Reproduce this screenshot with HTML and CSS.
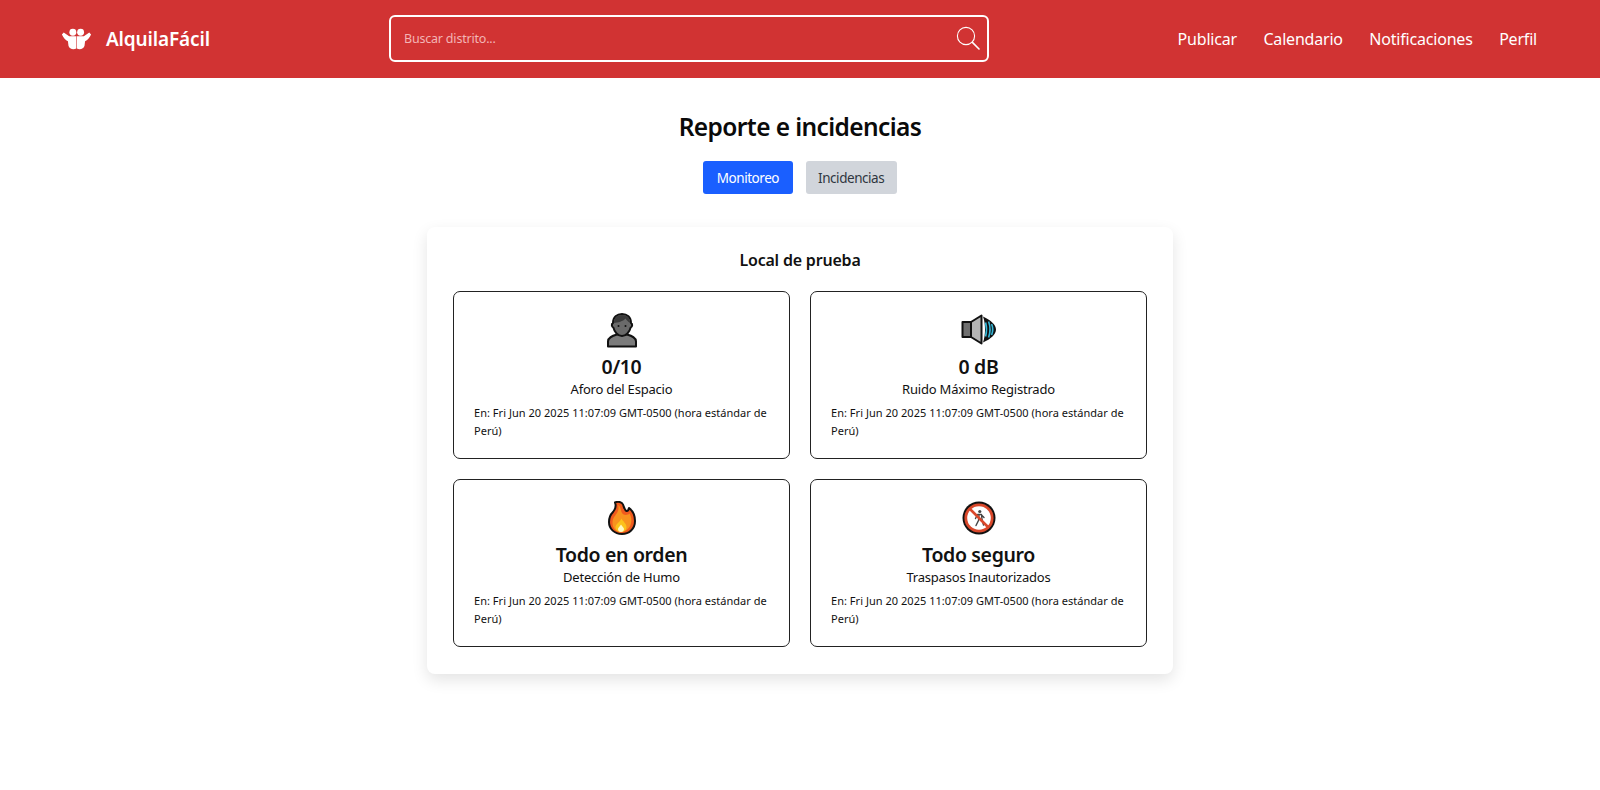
FILE: index.html
```html
<!DOCTYPE html>
<html lang="es">
<head>
<meta charset="utf-8">
<title>AlquilaFácil</title>
<link rel="stylesheet" href="styles.css">
</head>
<body>
<header class="topbar">
  <a class="brand" href="#">
    <svg class="brand-icon" viewBox="0 0 34 24" width="31" height="22" aria-hidden="true">
      <circle cx="13" cy="4.5" r="3.8" fill="#fff"/>
      <circle cx="21.5" cy="4.5" r="3.8" fill="#fff"/>
      <path fill="#fff" d="M1 7 L3 4.8 L9 9 H16.8 V22.5 C13.5 24 9 23 8.2 19.5 L7.6 14.5 C5 13.5 2.6 10.5 1 7Z"/>
      <path fill="#fff" d="M33 7 L31 4.8 L25 9 H17.4 V22.5 C20.5 24 25 23 25.8 19.5 L26.4 14.5 C29 13.5 31.4 10.5 33 7Z"/>
    </svg>
    <span class="brand-name">AlquilaFácil</span>
  </a>
  <form class="search">
    <input class="search-input" type="text" placeholder="Buscar distrito...">
    <svg class="search-icon" viewBox="0 0 24 24" width="24" height="24" aria-hidden="true">
      <circle cx="10" cy="10" r="8.6" fill="none" stroke="#fff" stroke-width="1.1"/>
      <path d="M16.4 16.4 L23 23" stroke="#fff" stroke-width="1.6" stroke-linecap="round"/>
    </svg>
  </form>
  <nav class="menu">
    <a href="#">Publicar</a>
    <a href="#">Calendario</a>
    <a href="#">Notificaciones</a>
    <a href="#">Perfil</a>
  </nav>
</header>

<main class="content">
  <h1 class="title">Reporte e incidencias</h1>
  <div class="tabs">
    <button class="tab tab-active" type="button">Monitoreo</button>
    <button class="tab" type="button">Incidencias</button>
  </div>

  <section class="panel">
    <h2 class="panel-title">Local de prueba</h2>
    <div class="grid">
      <article class="stat">
        <svg class="stat-icon" viewBox="0 0 36 36" aria-hidden="true">
          <path d="M4 33.5 V28.5 C4 24.5 8 23 13 21.5 H23 C28 23 32 24.5 32 28.5 V33.5Z" fill="#7b7b7b" stroke="#111" stroke-width="2" stroke-linejoin="round"/>
          <path d="M9 10 C9 4 13 1 18 1 C23 1 27 4 27 10 C28.6 10.6 28.6 14 26.6 14.6 C25.6 19 22 23 18 23 C14 23 10.4 19 9.4 14.6 C7.4 14 7.4 10.6 9 10Z" fill="#6a6a6a" stroke="#111" stroke-width="2" stroke-linejoin="round"/>
          <path d="M9.8 10 C10 5 13 2 18 2 C23 2 26 5 26.2 10 C24 8.5 22.5 7 21.5 5.5 C19 8.5 14 9.5 9.8 10Z" fill="#3a3a3a"/>
          <circle cx="14.5" cy="13" r="1" fill="#111"/>
          <circle cx="21.5" cy="13" r="1" fill="#111"/>
        </svg>
        <div class="stat-value">0/10</div>
        <div class="stat-label">Aforo del Espacio</div>
        <p class="stat-date">En: Fri Jun 20 2025 11:07:09 GMT-0500 (hora estándar de Perú)</p>
      </article>

      <article class="stat">
        <svg class="stat-icon" viewBox="0 0 36 36" aria-hidden="true">
          <path d="M1.5 9 H10 V24 H1.5Z" fill="#6f6f6f" stroke="#111" stroke-width="2" stroke-linejoin="round"/>
          <path d="M10 9 L20.5 2.5 V30.5 L10 24Z" fill="#b5b5b5" stroke="#111" stroke-width="2" stroke-linejoin="round"/>
          <path d="M22 3.5 C30 7 35 12 35 16.5 C35 21 30 26 22 29.5 C23.6 25 24 20.5 24 16.5 C24 12.5 23.6 8 22 3.5Z" fill="#111"/>
          <path d="M24.6 9.5 C25.8 14 25.8 19 24.6 23.5" fill="none" stroke="#35b6d6" stroke-width="1.6"/>
          <path d="M27.6 8.5 C29.2 13 29.2 20 27.6 24.5" fill="none" stroke="#35b6d6" stroke-width="1.6"/>
          <path d="M30.6 11 C31.8 14 31.8 19 30.6 22" fill="none" stroke="#35b6d6" stroke-width="1.6"/>
        </svg>
        <div class="stat-value">0 dB</div>
        <div class="stat-label">Ruido Máximo Registrado</div>
        <p class="stat-date">En: Fri Jun 20 2025 11:07:09 GMT-0500 (hora estándar de Perú)</p>
      </article>

      <article class="stat">
        <svg class="stat-icon" viewBox="0 0 36 36" aria-hidden="true">
          <path d="M11 1.5 C14 0 18 1 19 3.5 C20 6 20.5 9 22.5 10 C24 10.5 24.5 8.5 25 7 C29 10 31 15 31 20 C31 28 25 33 18 33 C10.5 33 5 28 5 21 C5 16 7 13 9 11 C11 8.5 12.5 5 11 1.5Z" fill="#f05a1e" stroke="#111" stroke-width="2" stroke-linejoin="round"/>
          <path d="M14 4 C16.5 5 16.5 8 17.5 11 C18.5 14 23 15 25.5 12.5 C27.5 16 28 20 26.5 24 C25 28 21 31 17 31 C12 31 8.5 27 8.5 22 C8.5 17 11 15 13 12 C14.5 9.5 15 7 14 4Z" fill="#f8931f"/>
          <path d="M17.5 17.5 C18.5 20 22.5 22.5 22.5 26 C22.5 29 20 31 17 31 C14 31 11.5 29 11.5 26 C11.5 23 16 21 17.5 17.5Z" fill="#fcc21b"/>
          <path d="M17 23.5 C18 25.5 20 26.5 20 28 C20 29.8 18.7 31 17 31 C15.3 31 14 29.8 14 28 C14 26.5 16 25.5 17 23.5Z" fill="#fff9c4"/>
        </svg>
        <div class="stat-value">Todo en orden</div>
        <div class="stat-label">Detección de Humo</div>
        <p class="stat-date">En: Fri Jun 20 2025 11:07:09 GMT-0500 (hora estándar de Perú)</p>
      </article>

      <article class="stat">
        <svg class="stat-icon" viewBox="0 0 36 36" aria-hidden="true">
          <circle cx="18" cy="17" r="16.5" fill="#111"/>
          <circle cx="18" cy="17" r="14.6" fill="#d9482b"/>
          <circle cx="18" cy="17" r="11.8" fill="#fff"/>
          <circle cx="18.8" cy="10.5" r="1.6" fill="#444"/>
          <path d="M16.5 13.5 H20.5 L21 18.5 L22.5 24 M18 14 L17.5 19.5 L15 24.5 M16.5 13.5 L14.5 17.5 M20.5 14 L23 16.5" fill="none" stroke="#444" stroke-width="1.4" stroke-linecap="round" stroke-linejoin="round"/>
          <path d="M8.5 7.5 L27.5 26.5" stroke="#d9482b" stroke-width="2.6"/>
        </svg>
        <div class="stat-value">Todo seguro</div>
        <div class="stat-label">Traspasos Inautorizados</div>
        <p class="stat-date">En: Fri Jun 20 2025 11:07:09 GMT-0500 (hora estándar de Perú)</p>
      </article>
    </div>
  </section>
</main>
</body>
</html>
```
FILE: styles.css
```css
* { box-sizing: border-box; }

html, body { margin: 0; padding: 0; }

body {
  background: #fff;
  color: #111;
  font-family: "Noto Sans", "Open Sans", sans-serif;
  height: 790px;
  overflow: hidden;
}

.topbar {
  display: flex;
  align-items: center;
  height: 78px;
  padding: 0 63px 0 61px;
  background: #d13333;
}

.brand {
  display: flex;
  align-items: center;
  gap: 14px;
  width: 328px;
  color: #fff;
  text-decoration: none;
}

.brand-icon { flex: none; }

.brand-name {
  font-size: 19px;
  font-weight: 600;
  letter-spacing: -0.15px;
}

.search {
  position: relative;
  width: 600px;
  height: 47px;
  margin-top: -1px;
}

.search-input {
  width: 100%;
  height: 100%;
  padding: 0 60px 0 13px;
  border: 2px solid #fff;
  border-radius: 6px;
  background: transparent;
  color: #fff;
  font: 12.5px "Noto Sans", sans-serif;
  letter-spacing: -0.2px;
  outline: none;
}

.search-input::placeholder { color: #f3b5b5; opacity: 1; }

.search-icon {
  position: absolute;
  top: 11px;
  right: 9px;
}

.menu {
  display: flex;
  gap: 26.5px;
  margin-left: auto;
}

.menu a {
  color: #fff;
  font-size: 16px;
  letter-spacing: -0.2px;
  text-decoration: none;
}

.content {
  display: flex;
  flex-direction: column;
  align-items: center;
}

.title {
  margin: 32px 0 0;
  font-size: 24.5px;
  font-weight: 600;
  line-height: 34px;
  letter-spacing: -0.6px;
  color: #0a0a0a;
}

.tabs {
  display: flex;
  gap: 13px;
  margin-top: 17px;
}

.tab {
  height: 33px;
  padding: 0 12.5px;
  border: 0;
  border-radius: 3px;
  background: #d1d5db;
  color: #2f3640;
  font: 13.5px "Noto Sans", sans-serif;
  letter-spacing: -0.45px;
}

.tab-active {
  padding: 0 13.5px;
  background: #1a5fff;
  color: #fff;
}

.panel {
  width: 746px;
  height: 447px;
  margin-top: 33px;
  padding: 21px 26px 26px;
  border-radius: 8px;
  background: #fff;
  box-shadow: 0 6px 16px rgba(0, 0, 0, 0.11);
}

.panel-title {
  margin: 0 0 19px;
  font-size: 16px;
  font-weight: 600;
  line-height: 24px;
  letter-spacing: -0.2px;
  text-align: center;
}

.grid {
  display: grid;
  grid-template-columns: 337px 337px;
  grid-auto-rows: 168px;
  gap: 20px;
}

.stat {
  padding: 21px 20px 0;
  border: 1px solid #222;
  border-radius: 7px;
  text-align: center;
}

.stat-icon {
  display: block;
  width: 36px;
  height: 36px;
  margin: 0 auto 6px;
}

.stat-value {
  font-size: 19.5px;
  font-weight: 600;
  line-height: 24.5px;
  letter-spacing: -0.35px;
}

.stat-label {
  font-size: 13px;
  line-height: 19px;
  letter-spacing: -0.2px;
}

.stat-date {
  margin: 5.5px 0 0;
  font-size: 11px;
  line-height: 17.5px;
  letter-spacing: 0.03px;
  text-align: left;
}
```
